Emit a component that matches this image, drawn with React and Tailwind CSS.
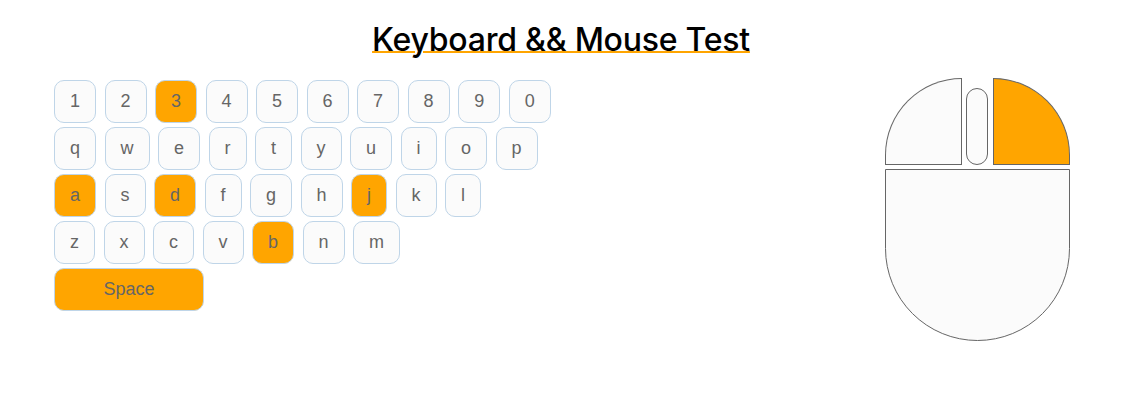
const rows = ['1234567890', 'qwertyuiop', 'asdfghjkl', 'zxcvbnm'];
const pressed = new Set(['3', 'a', 'd', 'j', 'b']);

function Key({ label, active, wide }) {
  return (
    <button
      className={`h-[43px] shrink-0 rounded-[10px] border border-[#bfd5e8] text-center font-['Liberation_Sans',Arial,sans-serif] text-[18px] leading-[21px] text-[#666666] ${
        wide ? 'w-[150px]' : 'px-[15px]'
      } ${active ? 'bg-[#ffa500]' : 'bg-[#fbfbfb]'}`}
    >
      {label}
    </button>
  );
}

function Mouse() {
  return (
    <div className="flex w-[185px] flex-col gap-1">
      <div className="flex items-end justify-between">
        <div className="h-[87px] w-[77px] rounded-tl-[77px] border border-[#666666] bg-[#fbfbfb]" />
        <div className="mr-px h-[77px] w-[22px] rounded-full border border-[#666666] bg-[#fbfbfb]" />
        <div className="h-[87px] w-[77px] rounded-tr-[77px] border border-[#666666] bg-[#ffa500]" />
      </div>
      <div className="h-[172px] rounded-b-[92.5px] border border-[#666666] bg-[#fbfbfb]" />
    </div>
  );
}

export default function App() {
  return (
    <main className="h-[414px] overflow-hidden bg-white pt-5 font-[Inter,sans-serif]">
      <h1 className="text-center text-[32px] leading-[40px] font-medium tracking-[-0.24px] text-black underline decoration-[#ffa500] decoration-2 underline-offset-[0px]">
        Keyboard &amp;&amp; Mouse Test
      </h1>
      <div className="flex items-start justify-between pt-[18px] pr-[52px] pl-[54px]">
        <div className="flex flex-col gap-1 pt-[2px]">
          {rows.map((row) => (
            <div key={row} className="flex gap-[8.5px]">
              {[...row].map((k) => (
                <Key key={k} label={k} active={pressed.has(k)} />
              ))}
            </div>
          ))}
          <div className="flex">
            <Key label="Space" active wide />
          </div>
        </div>
        <Mouse />
      </div>
    </main>
  );
}
